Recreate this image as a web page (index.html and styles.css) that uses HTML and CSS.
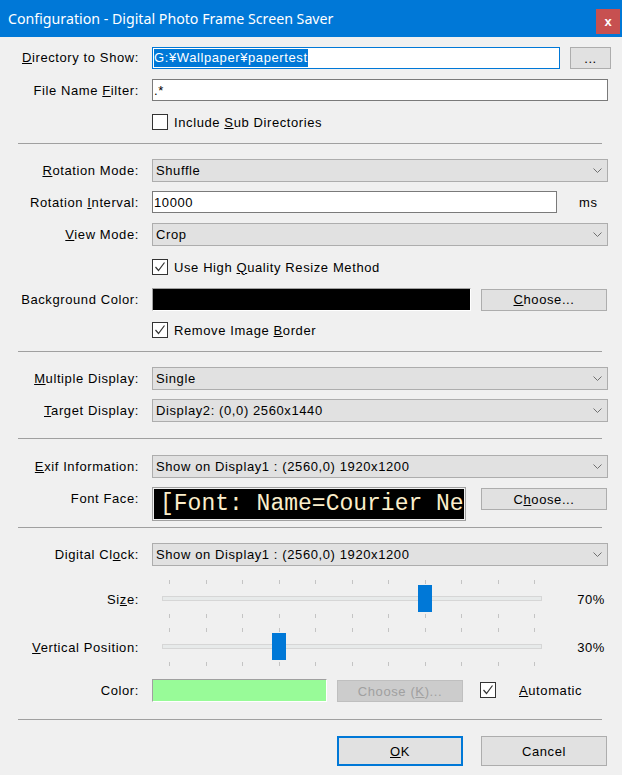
FILE: index.html
```html
<!DOCTYPE html>
<html>
<head>
<meta charset="utf-8">
<link rel="stylesheet" href="styles.css">
</head>
<body>
<div class="titlebar">
  <span class="title">Configuration - Digital Photo Frame Screen Saver</span>
  <span class="close">x</span>
</div>
<div class="content">
  <div class="row mt9">
    <span class="lbl"><u>D</u>irectory to Show:</span>
    <div class="field focus w-dir"><span class="sel">G:¥Wallpaper¥papertest</span></div>
    <span class="btn btn-dots">...</span>
  </div>
  <div class="row mt10">
    <span class="lbl">File Name <u>F</u>ilter:</span>
    <div class="field w-full">.*</div>
  </div>
  <div class="row cbrow mt13">
    <span class="cb"></span><span class="cbtext">Include <u>S</u>ub Directories</span>
  </div>
  <div class="sep mt13"></div>

  <div class="row mt15">
    <span class="lbl"><u>R</u>otation Mode:</span>
    <div class="combo"><span>Shuffle</span><svg class="chev" width="9" height="5" viewBox="0 0 9 5"><path d="M0.5 0.5 L4.5 4.5 L8.5 0.5" fill="none" stroke="#707070" stroke-width="1"/></svg></div>
  </div>
  <div class="row mt9">
    <span class="lbl">Rotation <u>I</u>nterval:</span>
    <div class="field w-int">10000</div>
    <span class="unit">ms</span>
  </div>
  <div class="row mt10">
    <span class="lbl"><u>V</u>iew Mode:</span>
    <div class="combo"><span>Crop</span><svg class="chev" width="9" height="5" viewBox="0 0 9 5"><path d="M0.5 0.5 L4.5 4.5 L8.5 0.5" fill="none" stroke="#707070" stroke-width="1"/></svg></div>
  </div>
  <div class="row cbrow mt13">
    <span class="cb"><svg width="14" height="14" viewBox="0 0 14 14"><path d="M2.5 7 L5.5 10.5 L11.5 2.5" fill="none" stroke="#333" stroke-width="1.2"/></svg></span><span class="cbtext">Use High <u>Q</u>uality Resize Method</span>
  </div>
  <div class="row mt13">
    <span class="lbl">Background Color:</span>
    <div class="swatch black w-bg"></div>
    <span class="btn btn-choose"><u>C</u>hoose...</span>
  </div>
  <div class="row cbrow mt11">
    <span class="cb"><svg width="14" height="14" viewBox="0 0 14 14"><path d="M2.5 7 L5.5 10.5 L11.5 2.5" fill="none" stroke="#333" stroke-width="1.2"/></svg></span><span class="cbtext">Remove Image <u>B</u>order</span>
  </div>
  <div class="sep mt13"></div>

  <div class="row mt15">
    <span class="lbl"><u>M</u>ultiple Display:</span>
    <div class="combo"><span>Single</span><svg class="chev" width="9" height="5" viewBox="0 0 9 5"><path d="M0.5 0.5 L4.5 4.5 L8.5 0.5" fill="none" stroke="#707070" stroke-width="1"/></svg></div>
  </div>
  <div class="row mt9">
    <span class="lbl"><u>T</u>arget Display:</span>
    <div class="combo"><span>Display2: (0,0) 2560x1440</span><svg class="chev" width="9" height="5" viewBox="0 0 9 5"><path d="M0.5 0.5 L4.5 4.5 L8.5 0.5" fill="none" stroke="#707070" stroke-width="1"/></svg></div>
  </div>
  <div class="sep mt16"></div>

  <div class="row mt16">
    <span class="lbl"><u>E</u>xif Information:</span>
    <div class="combo"><span>Show on Display1 : (2560,0) 1920x1200</span><svg class="chev" width="9" height="5" viewBox="0 0 9 5"><path d="M0.5 0.5 L4.5 4.5 L8.5 0.5" fill="none" stroke="#707070" stroke-width="1"/></svg></div>
  </div>
  <div class="row mt9">
    <span class="lbl lbl-top">Font Face:</span>
    <div class="swatch black fontbox"><span class="fonttext">[Font: Name=Courier Ne</span></div>
    <span class="btn btn-choose top1">C<u>h</u>oose...</span>
  </div>
  <div class="sep mt6"></div>

  <div class="row mt15">
    <span class="lbl">Digital Cl<u>o</u>ck:</span>
    <div class="combo"><span>Show on Display1 : (2560,0) 1920x1200</span><svg class="chev" width="9" height="5" viewBox="0 0 9 5"><path d="M0.5 0.5 L4.5 4.5 L8.5 0.5" fill="none" stroke="#707070" stroke-width="1"/></svg></div>
  </div>
  <div class="row mt14">
    <span class="lbl">Si<u>z</u>e:</span>
    <div class="slider">
      <div class="ticks"><i></i><i></i><i></i><i></i><i></i><i></i><i></i><i></i><i></i><i></i><i></i></div>
      <div class="track"></div>
      <div class="ticks"><i></i><i></i><i></i><i></i><i></i><i></i><i></i><i></i><i></i><i></i><i></i></div>
      <div class="thumb" style="left:266px"></div>
    </div>
    <span class="pct">70%</span>
  </div>
  <div class="row mt10">
    <span class="lbl"><u>V</u>ertical Position:</span>
    <div class="slider">
      <div class="ticks"><i></i><i></i><i></i><i></i><i></i><i></i><i></i><i></i><i></i><i></i><i></i></div>
      <div class="track"></div>
      <div class="ticks"><i></i><i></i><i></i><i></i><i></i><i></i><i></i><i></i><i></i><i></i><i></i></div>
      <div class="thumb" style="left:120px"></div>
    </div>
    <span class="pct">30%</span>
  </div>
  <div class="row mt13">
    <span class="lbl">Color:</span>
    <div class="swatch green"></div>
    <span class="btn btn-choose disabled top1">Choose (<u>K</u>)...</span>
    <span class="cb cb-auto"><svg width="14" height="14" viewBox="0 0 14 14"><path d="M2.5 7 L5.5 10.5 L11.5 2.5" fill="none" stroke="#333" stroke-width="1.2"/></svg></span>
    <span class="auto"><u>A</u>utomatic</span>
  </div>
  <div class="sep mt17"></div>

  <div class="row buttons mt16">
    <span class="btn big ok"><u>O</u>K</span>
    <span class="btn big">Cancel</span>
  </div>
</div>
</body>
</html>
```

FILE: styles.css
```css
html, body {
  margin: 0;
  padding: 0;
}
body {
  background: #f0f0f0;
  font-family: "Liberation Sans", Arial, sans-serif;
  font-size: 13px;
  letter-spacing: 0.6px;
  color: #000;
  width: 622px;
  height: 775px;
  overflow: hidden;
}
.titlebar {
  height: 37px;
  background: #0078d7;
  display: flex;
  justify-content: space-between;
  align-items: flex-start;
}
.title {
  color: #fff;
  font-family: "Noto Sans", sans-serif;
  font-size: 14.2px;
  letter-spacing: 0;
  line-height: 37px;
  margin-left: 8px;
}
.close {
  width: 24px;
  height: 25px;
  margin-top: 9px;
  margin-right: 2px;
  background: #c75050;
  color: #fff;
  font-weight: bold;
  font-size: 13px;
  letter-spacing: 0;
  display: flex;
  align-items: center;
  justify-content: center;
}
.content {
  display: flex;
  flex-direction: column;
}
.row {
  display: flex;
  align-items: center;
  flex: none;
}
.lbl {
  width: 139px;
  margin-right: 13px;
  text-align: right;
  white-space: nowrap;
  flex: none;
}
.lbl-top {
  align-self: flex-start;
  line-height: 22px;
  margin-top: 1px;
}
.cbrow {
  padding-left: 152px;
}
.mt6 { margin-top: 6px; }
.mt9 { margin-top: 9px; }
.mt10 { margin-top: 10px; }
.mt11 { margin-top: 11px; }
.mt13 { margin-top: 13px; }
.mt14 { margin-top: 14px; }
.mt15 { margin-top: 15px; }
.mt16 { margin-top: 16px; }
.mt17 { margin-top: 17px; }

.field {
  height: 22px;
  box-sizing: border-box;
  border: 1px solid #7a7a7a;
  background: #fff;
  display: flex;
  align-items: center;
  padding-left: 1px;
  white-space: nowrap;
}
.field.focus {
  border-color: #0078d7;
}
.sel {
  background: #0078d7;
  color: #fff;
  line-height: 18px;
}
.w-dir { width: 408px; }
.w-full { width: 456px; }
.w-int { width: 405px; }
.unit {
  margin-left: 22px;
}
.combo {
  width: 456px;
  height: 23px;
  box-sizing: border-box;
  border: 1px solid #adadad;
  background: #e1e1e1;
  display: flex;
  align-items: center;
  justify-content: space-between;
  padding-left: 3px;
  padding-right: 5px;
  white-space: nowrap;
}
.chev {
  display: block;
}
.cb {
  width: 16px;
  height: 16px;
  box-sizing: border-box;
  border: 1px solid #333;
  background: #fff;
  display: flex;
  align-items: center;
  justify-content: center;
  flex: none;
}
.cb svg {
  display: block;
}
.cbtext {
  margin-left: 6px;
}
.sep {
  margin-left: 18px;
  width: 584px;
  height: 1px;
  background: #a0a0a0;
  flex: none;
}
.btn {
  box-sizing: border-box;
  border: 1px solid #adadad;
  background: #e1e1e1;
  height: 22px;
  display: flex;
  align-items: center;
  justify-content: center;
  flex: none;
  white-space: nowrap;
}
.btn-dots {
  width: 41px;
  margin-left: 10px;
  align-self: flex-start;
  margin-top: 1px;
}
.btn-choose {
  width: 126px;
  margin-left: 10px;
}
.top1 {
  align-self: flex-start;
  margin-top: 1px;
}
.btn.disabled {
  background: #cccccc;
  border-color: #bfbfbf;
  color: #a0a0a0;
}
.swatch {
  height: 23px;
  box-sizing: border-box;
  border-top: 1px solid #a0a0a0;
  border-left: 1px solid #a0a0a0;
  border-right: 1px solid #ffffff;
  border-bottom: 1px solid #ffffff;
  flex: none;
}
.black { background: #000; }
.w-bg { width: 319px; }
.fontbox {
  width: 314px;
  height: 34px;
  border: 1px solid #a0a0a0;
  box-shadow: inset 0 0 0 1px #f0f0f0;
  overflow: hidden;
  display: flex;
  align-items: center;
  padding-left: 7px;
  white-space: nowrap;
}
.fonttext {
  font-family: "Liberation Mono", "Courier New", monospace;
  font-size: 23px;
  letter-spacing: 0;
  color: #fbeecb;
}
.fontbox + .btn-choose {
  margin-left: 15px;
}
.green {
  background: #98fb98;
  width: 175px;
}
.cb-auto {
  margin-left: 17px;
  align-self: flex-start;
  margin-top: 3px;
}
.auto {
  margin-left: 23px;
}
.slider {
  position: relative;
  width: 400px;
  height: 38px;
  flex: none;
}
.ticks {
  margin-left: 17px;
  width: 366px;
  height: 4px;
  display: flex;
  justify-content: space-between;
}
.ticks i {
  width: 1px;
  height: 4px;
  background: #c4c4c4;
}
.track {
  margin-left: 10px;
  margin-top: 12px;
  width: 380px;
  height: 5px;
  box-sizing: border-box;
  border: 1px solid #d6d6d6;
  background: #e7eaea;
}
.track + .ticks {
  margin-top: 13px;
}
.thumb {
  position: absolute;
  top: 5px;
  width: 14px;
  height: 27px;
  background: #0078d7;
}
.pct {
  margin-left: auto;
  margin-right: 17px;
  padding-top: 1px;
}
.buttons {
  padding-left: 337px;
}
.big {
  width: 126px;
  height: 30px;
}
.ok {
  border: 2px solid #0078d7;
  margin-right: 18px;
}
```
